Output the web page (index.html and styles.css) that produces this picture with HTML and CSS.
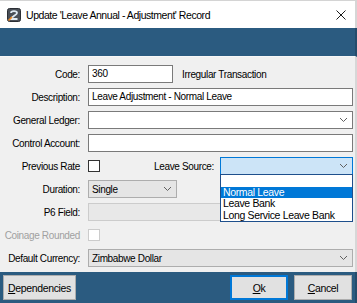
FILE: index.html
```html
<!DOCTYPE html>
<html lang="en">
<head>
  <meta charset="UTF-8">
  <title>Update Record</title>
  <link rel="stylesheet" href="styles.css">
</head>
<body>
  <div class="window">
    <!-- Title bar -->
    <div class="titlebar">
      <svg class="app-icon" width="14" height="14" viewBox="0 0 14 14">
        <rect x="0.5" y="0.5" width="13" height="13" rx="2" fill="#4a4f57" stroke="#2b2f35"/>
        <path d="M4 5 C4 2.5 10 2.5 10 5 C10 7 5 8 4 11 L10.5 11" fill="none" stroke="#dfe9f2" stroke-width="1.8"/>
        <path d="M1.5 12.5 L5 9" stroke="#f08a24" stroke-width="1.6"/>
      </svg>
      <span class="title">Update 'Leave Annual - Adjustment' Record</span>
      <svg class="close" width="10" height="10" viewBox="0 0 10 10">
        <path d="M0.5 0.5 L9.5 9.5 M9.5 0.5 L0.5 9.5" stroke="#1a1a1a" stroke-width="1"/>
      </svg>
    </div>

    <div class="banner"></div>

    <!-- Form -->
    <div class="form">
      <div class="lbl">Code:</div>
      <div class="field">
        <div class="textbox code">360</div>
        <span class="note">Irregular Transaction</span>
      </div>

      <div class="lbl">Description:</div>
      <div class="field"><div class="textbox wide">Leave Adjustment - Normal Leave</div></div>

      <div class="lbl">General Ledger:</div>
      <div class="field">
        <div class="combo wide">
          <span></span>
          <svg class="chev" width="7" height="4" viewBox="0 0 7 4"><polyline points="0,0 3.5,3.5 7,0" fill="none" stroke="#606060"/></svg>
        </div>
      </div>

      <div class="lbl">Control Account:</div>
      <div class="field"><div class="textbox wide"></div></div>

      <div class="lbl plain">Previous Rate</div>
      <div class="field">
        <div class="check"></div>
        <span class="lbl source-lbl">Leave Source:</span>
        <div class="source-wrap">
          <div class="combo focused">
            <span></span>
            <svg class="chev" width="7" height="4" viewBox="0 0 7 4"><polyline points="0,0 3.5,3.5 7,0" fill="none" stroke="#606060"/></svg>
          </div>
          <ul class="droplist">
            <li>&nbsp;</li>
            <li class="selected">Normal Leave</li>
            <li>Leave Bank</li>
            <li>Long Service Leave Bank</li>
          </ul>
        </div>
      </div>

      <div class="lbl">Duration:</div>
      <div class="field">
        <div class="combo list duration">
          <span>Single</span>
          <svg class="chev" width="7" height="4" viewBox="0 0 7 4"><polyline points="0,0 3.5,3.5 7,0" fill="none" stroke="#606060"/></svg>
        </div>
      </div>

      <div class="lbl">P6 Field:</div>
      <div class="field"><div class="textbox wide disabled"></div></div>

      <div class="lbl plain muted">Coinage Rounded</div>
      <div class="field"><div class="check off"></div></div>

      <div class="lbl">Default Currency:</div>
      <div class="field">
        <div class="combo list wide">
          <span>Zimbabwe Dollar</span>
          <svg class="chev" width="7" height="4" viewBox="0 0 7 4"><polyline points="0,0 3.5,3.5 7,0" fill="none" stroke="#606060"/></svg>
        </div>
      </div>
    </div>

    <!-- Buttons -->
    <div class="footer">
      <button class="btn deps"><u>D</u>ependencies</button>
      <div class="spacer"></div>
      <button class="btn default"><u>O</u>k</button>
      <button class="btn"><u>C</u>ancel</button>
    </div>
  </div>
</body>
</html>
```

FILE: styles.css
```css
/* base */
body {
  margin: 0;
  padding: 0;
  width: 357px;
  height: 303px;
  overflow: hidden;
  background: #f0f0f0;
  font-family: "Liberation Sans", Arial, sans-serif;
  font-size: 10px;
  letter-spacing: -0.35px;
  color: #000;
}
.window {
  display: flex;
  flex-direction: column;
  height: 303px;
}
/* title bar */
.titlebar {
  height: 27px;
  border-top: 1px solid #d4d4d4;
  border-right: 2px solid rgba(0, 0, 0, 0.16);
  background: #fff;
  display: flex;
  align-items: center;
  padding-left: 7px;
}
.app-icon {
  margin-right: 5px;
  margin-top: 1px;
}
.title {
  font-size: 10.5px;
  letter-spacing: -0.45px;
  color: #000;
  flex: 1;
  margin-top: 1px;
}
.close {
  margin-right: 9px;
}
/* blue bands */
.banner {
  height: 28px;
  background: #2b5b80;
  border-right: 2px solid rgba(0, 0, 0, 0.16);
  border-bottom: 1px solid #f7f7f7;
}
.footer {
  height: 31px;
  box-sizing: border-box;
  background: #2b5b80;
  border-right: 2px solid rgba(0, 0, 0, 0.16);
  display: flex;
  gap: 6px;
  padding: 3px 3px 0 3px;
}
/* form grid */
.form {
  flex: 1;
  border-right: 2px solid rgba(0, 0, 0, 0.1);
  display: grid;
  grid-template-columns: 80px 265px;
  grid-auto-rows: 18px;
  column-gap: 8px;
  row-gap: 5px;
  padding-top: 8px;
  align-content: start;
}
.lbl {
  display: flex;
  align-items: center;
  justify-content: flex-end;
  white-space: nowrap;
}
.muted {
  color: #a0a0a0;
}
.field {
  display: flex;
  align-items: center;
  height: 18px;
}
.textbox {
  box-sizing: border-box;
  height: 18px;
  background: #fff;
  border: 1px solid #7a7a7a;
  padding: 0 3px;
  line-height: 16px;
}
.textbox.code {
  width: 85px;
}
.wide {
  width: 265px;
}
.textbox.disabled {
  background: #e8e8e8;
  border-color: #cccccc;
}
.note {
  margin-left: 9px;
}
.combo {
  box-sizing: border-box;
  height: 18px;
  background: #fff;
  border: 1px solid #7a7a7a;
  display: flex;
  align-items: center;
  justify-content: space-between;
  padding: 0 5px 0 3px;
}
.combo.list {
  background: #e5e5e5;
  border-color: #adadad;
}
.combo.duration {
  width: 89px;
}
.combo.focused {
  background: #cce4f7;
  border-color: #0078d7;
  width: 133px;
}
.check {
  box-sizing: border-box;
  width: 12px;
  height: 12px;
  background: #fff;
  border: 1px solid #333;
}
.check.off {
  border-color: #cccccc;
}
.source-lbl {
  margin-left: 54px;
  width: 60px;
}
.source-wrap {
  position: relative;
  margin-left: 6px;
}
/* open dropdown overlay */
.droplist {
  position: absolute;
  left: 0;
  top: 17px;
  width: 133px;
  box-sizing: border-box;
  margin: 0;
  padding: 0;
  list-style: none;
  background: #fff;
  border: 1px solid #1e4f8c;
  z-index: 2;
}
.droplist li {
  height: 11.5px;
  line-height: 11px;
  padding-left: 2px;
  font-size: 10.5px;
  white-space: nowrap;
}
.droplist li.selected {
  background: #0078d7;
  color: #fff;
}
/* buttons */
.spacer {
  flex: 1;
}
.btn {
  height: 25px;
  width: 58px;
  box-sizing: border-box;
  background: #e1e1e1;
  border: 1px solid #adadad;
  font-family: "Liberation Sans", Arial, sans-serif;
  font-size: 10.5px;
  letter-spacing: -0.35px;
  color: #000;
  padding: 0;
}
.btn.deps {
  width: 73px;
}
.btn.default {
  border: 2px solid #0078d7;
}
.btn u {
  text-underline-offset: 1px;
}
```
